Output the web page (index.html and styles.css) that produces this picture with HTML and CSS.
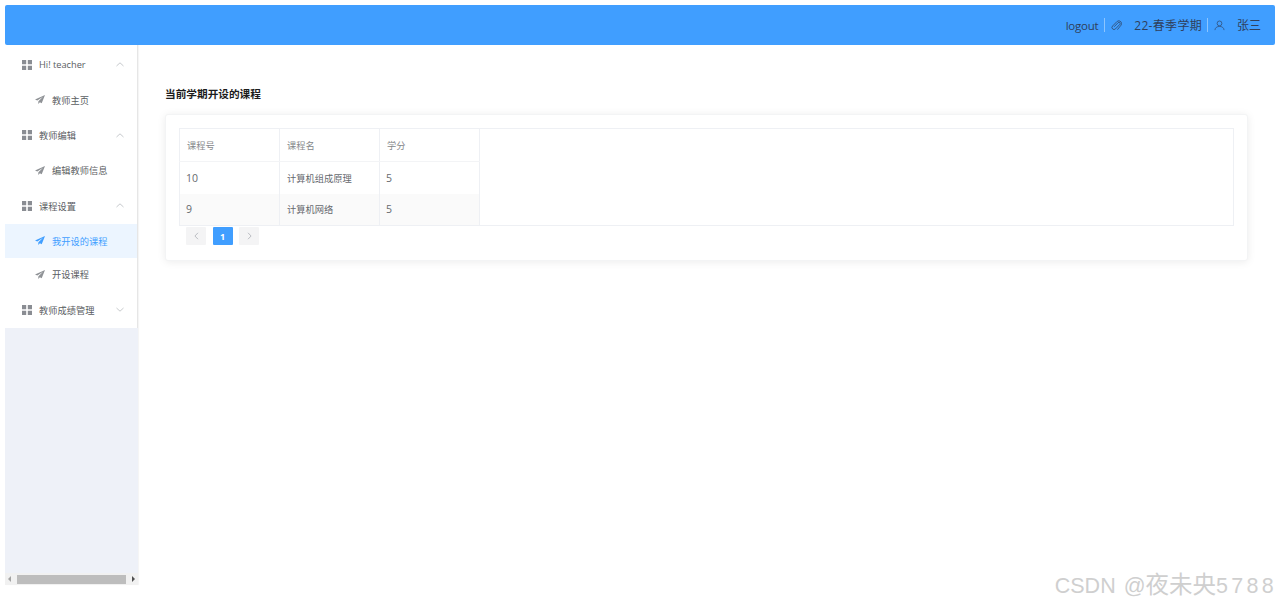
FILE: index.html
```html
<!DOCTYPE html>
<html lang="zh">
<head>
<meta charset="utf-8">
<title>当前学期开设的课程</title>
<link rel="stylesheet" href="styles.css">
</head>
<body>
<svg class="defs" width="0" height="0" aria-hidden="true">
  <symbol id="grid" viewBox="0 0 10 10"><path fill="currentColor" d="M0 0h4.200v4.200H0zM5.800 0H10v4.200H5.800zM0 5.800h4.200V10H0zM5.800 5.800H10V10H5.800z"/></symbol>
  <symbol id="plane" viewBox="0 0 10 9"><path fill="currentColor" d="M10 0 0 4.400l2.300 1.200L8 1.800 3.400 6.300 3.200 9l1.700-1.700 1.800 1z"/></symbol>
  <symbol id="up" viewBox="0 0 8 5"><path fill="none" stroke="currentColor" stroke-width=".7" d="M.5 4 4 .8 7.500 4"/></symbol>
  <symbol id="down" viewBox="0 0 8 5"><path fill="none" stroke="currentColor" stroke-width=".7" d="M.5 1 4 4.200 7.500 1"/></symbol>
  <symbol id="left" viewBox="0 0 5 8"><path fill="none" stroke="currentColor" stroke-width=".9" d="M4 .8.900 4 4 7.200"/></symbol>
  <symbol id="right" viewBox="0 0 5 8"><path fill="none" stroke="currentColor" stroke-width=".9" d="M1 .8 4.100 4 1 7.200"/></symbol>
</svg>
<div class="app">
  <header class="topbar">
    <span class="top-link">logout</span>
    <span class="sep"></span>
    <svg class="top-icon clip" viewBox="0 0 12 12"><path fill="none" stroke="currentColor" stroke-width=".8" d="M3.400 7.400 7.700 3a1.300 1.300 0 0 1 1.900 1.800L4.900 9.700a2.200 2.200 0 0 1-3.200-3.100l5-5.100a3 3 0 0 1 4.200 4.200L7 10.600"/></svg>
    <span class="term">22-春季学期</span>
    <span class="sep"></span>
    <svg class="top-icon user" viewBox="0 0 12 12"><circle cx="6" cy="3.700" r="2.600" fill="none" stroke="currentColor" stroke-width=".7"/><path fill="none" stroke="currentColor" stroke-width=".7" d="M1 11c.3-2.600 2.200-4 5-4s4.700 1.400 5 4"/></svg>
    <span class="top-name">张三</span>
  </header>
  <div class="body">
    <aside class="aside">
      <nav class="menu">
        <div class="group"><svg class="ic-grid"><use href="#grid"/></svg><span class="group-label">Hi! teacher</span><svg class="chev"><use href="#up"/></svg></div>
        <div class="item"><svg class="ic-plane"><use href="#plane"/></svg><span>教师主页</span></div>
        <div class="group"><svg class="ic-grid"><use href="#grid"/></svg><span class="group-label">教师编辑</span><svg class="chev"><use href="#up"/></svg></div>
        <div class="item"><svg class="ic-plane"><use href="#plane"/></svg><span>编辑教师信息</span></div>
        <div class="group"><svg class="ic-grid"><use href="#grid"/></svg><span class="group-label">课程设置</span><svg class="chev"><use href="#up"/></svg></div>
        <div class="item active"><svg class="ic-plane"><use href="#plane"/></svg><span>我开设的课程</span></div>
        <div class="item"><svg class="ic-plane"><use href="#plane"/></svg><span>开设课程</span></div>
        <div class="group"><svg class="ic-grid"><use href="#grid"/></svg><span class="group-label">教师成绩管理</span><svg class="chev"><use href="#down"/></svg></div>
      </nav>
      <div class="scrollbar">
        <span class="arrow arrow-left"></span>
        <span class="thumb"></span>
        <span class="arrow arrow-right"></span>
      </div>
    </aside>
    <main class="main">
      <h1 class="title">当前学期开设的课程</h1>
      <section class="card">
        <table class="table">
          <thead>
            <tr><th>课程号</th><th>课程名</th><th>学分</th><th class="filler"></th></tr>
          </thead>
          <tbody>
            <tr><td class="num">10</td><td>计算机组成原理</td><td class="num">5</td><td class="filler"></td></tr>
            <tr class="striped"><td class="num">9</td><td>计算机网络</td><td class="num">5</td><td class="filler"></td></tr>
          </tbody>
        </table>
        <div class="pager">
          <span class="page-btn"><svg class="page-arrow"><use href="#left"/></svg></span>
          <span class="page-btn current">1</span>
          <span class="page-btn"><svg class="page-arrow"><use href="#right"/></svg></span>
        </div>
      </section>
    </main>
  </div>
</div>
<div class="watermark">CSDN @<span class="wm-cjk">夜未央</span><span class="wm-digits">5788</span></div>
</body>
</html>
```

FILE: styles.css
```css
* { box-sizing: border-box; }
html, body { height: 100%; }
body {
  margin: 0;
  padding: 5px;
  background: #fff;
  overflow: hidden;
  position: relative;
  font-family: "Open Sans", "Noto Sans CJK SC", sans-serif;
  font-size: 9.24px;
  color: #606266;
}
.defs { position: absolute; }
.app { display: flex; flex-direction: column; height: 580px; }

.topbar {
  flex: none;
  height: 40px;
  background: #409eff;
  border-radius: 2px;
  display: flex;
  align-items: center;
  justify-content: flex-end;
  padding-right: 14px;
  color: #2f3f5c;
  font-size: 12px;
}
.top-link { margin-right: 6px; font-size: 11.500px; letter-spacing: -.25px; }
.sep { width: 1px; height: 14px; background: #8cc5ff; }
.top-icon { width: 11px; height: 11px; flex: none; }
.clip { margin: 0 12px 0 6px; }
.term { margin-right: 5px; letter-spacing: .3px; }
.user { margin: 0 12px 0 6px; }

.body { flex: 1; display: flex; min-height: 0; }
.aside {
  flex: none;
  width: 133px;
  background: #eef1f8;
  display: flex;
  flex-direction: column;
  justify-content: space-between;
  box-shadow: 1px 0 1px rgba(0,0,0,.04);
}
.menu { background: #fff; border-right: 1px solid #e6e6e6; padding-top: 1px; }
.group, .item { display: flex; align-items: center; color: #5a5d62; }
.group { height: 37px; padding-left: 17px; }
.item { height: 33.500px; padding-left: 30px; }
.ic-grid { width: 10px; height: 10px; color: #8a8d93; margin-right: 7px; flex: none; }
.ic-plane { width: 10px; height: 9px; color: #8f9296; margin-right: 7px; flex: none; }
.group-label { flex: 1; }
.chev { width: 8px; height: 5px; color: #aeb1b6; margin-right: 13px; flex: none; }
.item.active { background: #ecf5ff; color: #409eff; }
.item.active .ic-plane { color: #409eff; }

.scrollbar {
  height: 12px;
  background: #f1f1f1;
  display: flex;
  align-items: center;
  padding: 0 3px;
}
.thumb { flex: 1; height: 9px; background: #bdbdbd; margin: 0 6px; }
.arrow { width: 0; height: 0; border-top: 3px solid transparent; border-bottom: 3px solid transparent; }
.arrow-left { border-right: 3px solid #a3a3a3; }
.arrow-right { border-left: 3px solid #505050; }

.main { flex: 1; min-width: 0; padding: 0 27px; }
.title {
  margin: 41.500px 0 12.500px;
  font-size: 10.670px;
  line-height: 15px;
  font-weight: 700;
  color: #1c1c1c;
}
.card {
  background: #fff;
  border: 1px solid #f3f4f5;
  border-radius: 3px;
  box-shadow: 0 1px 8px rgba(0,0,0,.08);
  padding: 13px 13px 15px;
}
.table {
  width: 100%;
  border-collapse: collapse;
  table-layout: fixed;
  border: 1px solid #eef0f4;
}
.table th, .table td {
  width: 100px;
  padding: 0 0 0 7px;
  border-right: 1px solid #eef0f4;
  text-align: left;
  font-weight: 400;
  color: #66696e;
}
.table th { height: 33px; color: #85878a; border-bottom: 1px solid #f3f4f6; }
.table td { height: 32px; }
.table .num { font-size: 10.500px; padding-left: 6px; }
.table .filler { width: auto; border-right: 0; border-bottom: 0; background: #fff; }
.striped td { background: #fafafa; }

.pager { display: flex; gap: 6.500px; padding: 1px 0 0 7px; }
.page-btn {
  width: 20px;
  height: 18px;
  border-radius: 1px;
  background: #f4f4f5;
  color: #b4b7bc;
  display: flex;
  align-items: center;
  justify-content: center;
  font-size: 9px;
  font-weight: 700;
  line-height: 1;
}
.page-arrow { width: 5px; height: 8px; }
.page-btn.current { background: #409eff; color: #fff; }

.watermark {
  position: absolute;
  right: 3px;
  bottom: 7px;
  font-family: "Liberation Sans", "Noto Sans CJK SC", sans-serif;
  font-size: 21.500px;
  line-height: 28px;
  word-spacing: 2px;
  color: #cfcfcf;
  white-space: nowrap;
}
.wm-cjk { font-size: 23.500px; }
.wm-digits { letter-spacing: 3.300px; }
```
